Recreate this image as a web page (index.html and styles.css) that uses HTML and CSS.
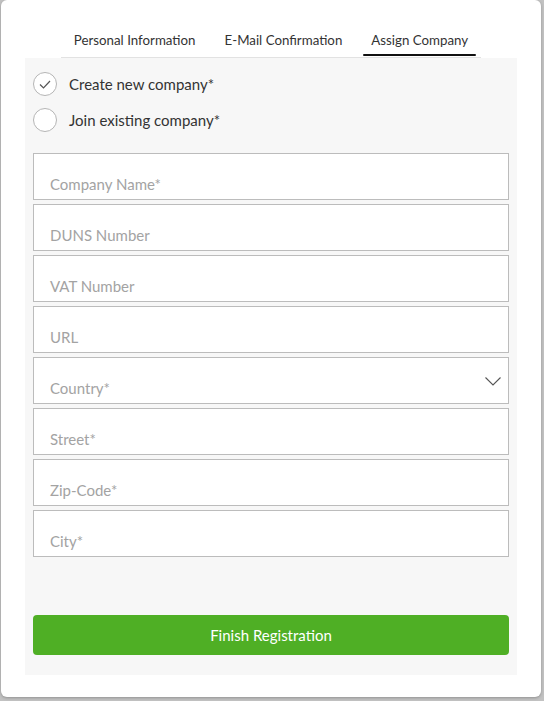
FILE: index.html
```html
<!DOCTYPE html>
<html lang="en">
<head>
<meta charset="utf-8">
<title>Assign Company</title>
<link rel="stylesheet" href="styles.css">
</head>
<body>
<div class="modal">
  <nav class="tabs">
    <span class="tab">Personal Information</span>
    <span class="tab">E-Mail Confirmation</span>
    <span class="tab active">Assign Company</span>
  </nav>
  <section class="panel">
    <div class="choices">
      <label class="choice">
        <span class="radio checked">
          <svg viewBox="0 0 24 24" width="24" height="24"><path d="M7 12.5 L10.5 16 L17 9" fill="none" stroke="#555" stroke-width="1.2"/></svg>
        </span>
        <span class="choice-text">Create new company*</span>
      </label>
      <label class="choice">
        <span class="radio"></span>
        <span class="choice-text">Join existing company*</span>
      </label>
    </div>
    <div class="fields">
      <div class="field"><span class="ph">Company Name*</span></div>
      <div class="field"><span class="ph">DUNS Number</span></div>
      <div class="field"><span class="ph">VAT Number</span></div>
      <div class="field"><span class="ph">URL</span></div>
      <div class="field select"><span class="ph">Country*</span>
        <svg class="chev" viewBox="0 0 16 9" width="16" height="9"><path d="M0.5 0.5 L8 8 L15.5 0.5" fill="none" stroke="#555" stroke-width="1.1"/></svg>
      </div>
      <div class="field"><span class="ph">Street*</span></div>
      <div class="field"><span class="ph">Zip-Code*</span></div>
      <div class="field"><span class="ph">City*</span></div>
    </div>
    <button class="finish">Finish Registration</button>
  </section>
</div>
</body>
</html>
```
FILE: styles.css
```css
html, body {
  margin: 0;
  padding: 0;
}
body {
  background: #c2c2c2;
  font-family: Lato, "Noto Sans", sans-serif;
  width: 544px;
  height: 701px;
  overflow: hidden;
}
.modal {
  margin-left: 1px;
  width: 540px;
  height: 697px;
  background: #fff;
  border-radius: 6px;
  box-shadow: 0 1px 3px rgba(0,0,0,0.25);
  padding: 0 24px;
  box-sizing: border-box;
  display: flex;
  flex-direction: column;
  align-items: center;
}
.tabs {
  width: 420px;
  padding-top: 30px;
  padding-bottom: 1px;
  border-bottom: 1px solid #e2e2e2;
  display: flex;
  justify-content: center;
  gap: 13px;
}
.tab {
  position: relative;
  flex-shrink: 0;
  white-space: nowrap;
  font-size: 13.3px;
  line-height: 20px;
  color: #333;
  padding: 0 8px 6px;
}
.tab.active::after {
  content: "";
  position: absolute;
  left: 0;
  right: 0;
  bottom: 0;
  height: 2px;
  border-radius: 1px;
  background: #111;
}
.panel {
  align-self: stretch;
  background: #f7f7f7;
  padding: 14px 8px 20px;
  display: flex;
  flex-direction: column;
}
.choices {
  display: flex;
  flex-direction: column;
  gap: 12px;
}
.choice {
  display: flex;
  align-items: center;
  gap: 12px;
  height: 24px;
}
.radio {
  width: 24px;
  height: 24px;
  box-sizing: border-box;
  border: 1px solid #b5b5b5;
  border-radius: 50%;
  background: #fff;
  display: flex;
  align-items: center;
  justify-content: center;
}
.radio svg {
  display: block;
  margin: -1px;
}
.choice-text {
  font-size: 15px;
  color: #333;
}
.fields {
  margin-top: 21px;
  display: flex;
  flex-direction: column;
  gap: 4px;
}
.field {
  position: relative;
  height: 47px;
  box-sizing: border-box;
  border: 1px solid #bcbcbc;
  background: #fff;
  padding: 0 16px 5px;
  display: flex;
  align-items: flex-end;
}
.ph {
  font-size: 15px;
  line-height: 20px;
  color: #a3a3a3;
}
.chev {
  position: absolute;
  right: 7px;
  top: 19px;
}
.finish {
  margin-top: 58px;
  height: 40px;
  border: none;
  border-radius: 4px;
  background: #4faf25;
  color: #fff;
  font-family: Lato, "Noto Sans", sans-serif;
  font-size: 15px;
  cursor: pointer;
}
```
